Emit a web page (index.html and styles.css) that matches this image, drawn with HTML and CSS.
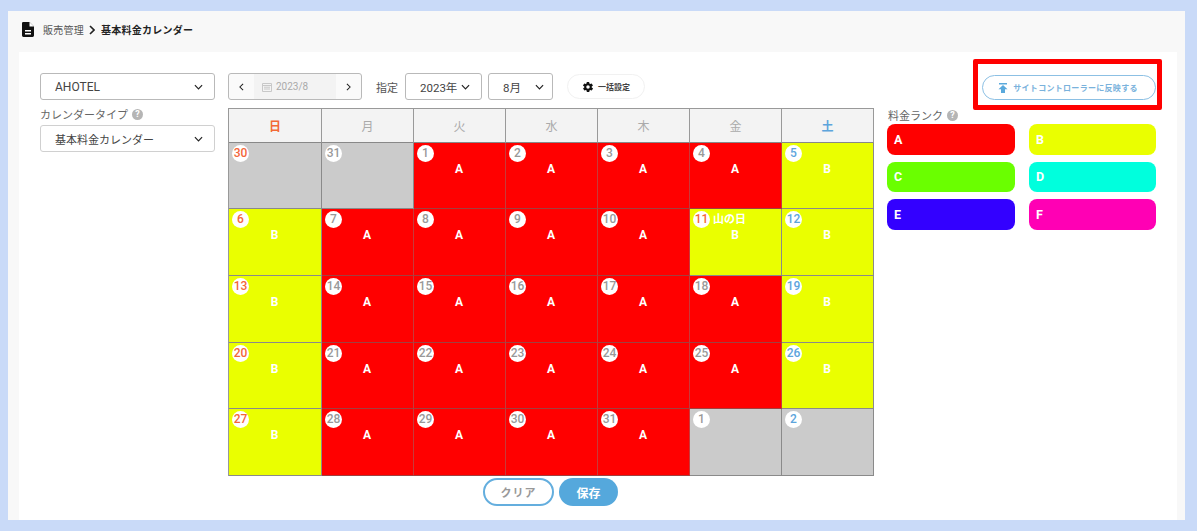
FILE: index.html
```html
<!DOCTYPE html>
<html lang="ja">
<head>
<meta charset="utf-8">
<title>基本料金カレンダー</title>
<link rel="stylesheet" href="styles.css">
</head>
<body>
<main class="panel">
  <nav class="crumbs">
    <svg class="doc" viewBox="0 0 12 15" width="12" height="15"><path d="M1.2 0H7.5L12 4.5V13.6A1.4 1.4 0 0 1 10.6 15H1.4A1.4 1.4 0 0 1 0 13.6V1.2A1.2 1.2 0 0 1 1.2 0Z" fill="#111"/><path d="M7.5 0V4.5H12Z" fill="#fff"/><path d="M3 8H9V9.4H3ZM3 11H9V12.4H3Z" fill="#fff"/></svg>
    <span class="crumb">販売管理</span>
    <svg class="crumb-sep" viewBox="0 0 6 10" width="6" height="10"><path d="M1 1L5 5L1 9" fill="none" stroke="#222" stroke-width="1.6"/></svg>
    <span class="crumb current">基本料金カレンダー</span>
  </nav>
  <section class="card">
    <aside class="left">
      <div class="select hotel"><span>AHOTEL</span><svg class="chev" viewBox="0 0 10 6"><path d="M1 1L5 5L9 1"/></svg></div>
      <div class="label">カレンダータイプ <span class="help">?</span></div>
      <div class="select type"><span>基本料金カレンダー</span><svg class="chev" viewBox="0 0 10 6"><path d="M1 1L5 5L9 1"/></svg></div>
    </aside>
    <div class="middle">
      <div class="toolbar">
        <div class="datenav">
          <span class="arrow"><svg viewBox="0 0 6 10" width="5" height="8"><path d="M5 1L1 5L5 9" fill="none" stroke="#222" stroke-width="1.3"/></svg></span>
          <span class="dateval"><svg viewBox="0 0 10 10" width="10" height="10"><path d="M.5 1.5H9.5V9.5H.5ZM.5 3.5H9.5M2 5.2H8M2 7H8" fill="none" stroke="#c8c8c8" stroke-width="1"/></svg>2023/8</span>
          <span class="arrow"><svg viewBox="0 0 6 10" width="5" height="8"><path d="M1 1L5 5L1 9" fill="none" stroke="#222" stroke-width="1.3"/></svg></span>
        </div>
        <span class="shitei">指定</span>
        <div class="select year"><span>2023年</span><svg class="chev" viewBox="0 0 10 6"><path d="M1 1L5 5L9 1"/></svg></div>
        <div class="select month"><span>8月</span><svg class="chev" viewBox="0 0 10 6"><path d="M1 1L5 5L9 1"/></svg></div>
        <button class="bulk"><svg viewBox="0 0 24 24" width="12" height="12"><path fill="#111" d="M19.4 13a7.5 7.5 0 0 0 0-2l2.1-1.6a.5.5 0 0 0 .1-.7l-2-3.4a.5.5 0 0 0-.6-.2l-2.5 1a7.3 7.3 0 0 0-1.7-1l-.4-2.7a.5.5 0 0 0-.5-.4h-4a.5.5 0 0 0-.5.4l-.4 2.7a7.3 7.3 0 0 0-1.7 1l-2.5-1a.5.5 0 0 0-.6.2l-2 3.4a.5.5 0 0 0 .1.7L4.6 11a7.5 7.5 0 0 0 0 2l-2.1 1.6a.5.5 0 0 0-.1.7l2 3.4a.5.5 0 0 0 .6.2l2.5-1a7.3 7.3 0 0 0 1.7 1l.4 2.7a.5.5 0 0 0 .5.4h4a.5.5 0 0 0 .5-.4l.4-2.7a7.3 7.3 0 0 0 1.7-1l2.5 1a.5.5 0 0 0 .6-.2l2-3.4a.5.5 0 0 0-.1-.7ZM12 15.5a3.5 3.5 0 1 1 0-7 3.5 3.5 0 0 1 0 7Z"/></svg>一括設定</button>
      </div>
      <div class="calendar">
        <div class="wd sun">日</div><div class="wd">月</div><div class="wd">火</div><div class="wd">水</div><div class="wd">木</div><div class="wd">金</div><div class="wd sat">土</div>

        <div class="day off"><b class="num sun">30</b></div>
        <div class="day off"><b class="num">31</b></div>
        <div class="day a"><b class="num">1</b><i>A</i></div>
        <div class="day a"><b class="num">2</b><i>A</i></div>
        <div class="day a"><b class="num">3</b><i>A</i></div>
        <div class="day a"><b class="num">4</b><i>A</i></div>
        <div class="day b"><b class="num sat">5</b><i>B</i></div>

        <div class="day b"><b class="num sun">6</b><i>B</i></div>
        <div class="day a"><b class="num">7</b><i>A</i></div>
        <div class="day a"><b class="num">8</b><i>A</i></div>
        <div class="day a"><b class="num">9</b><i>A</i></div>
        <div class="day a"><b class="num">10</b><i>A</i></div>
        <div class="day b"><b class="num sun">11</b><span class="holiday">山の日</span><i>B</i></div>
        <div class="day b"><b class="num sat">12</b><i>B</i></div>

        <div class="day b"><b class="num sun">13</b><i>B</i></div>
        <div class="day a"><b class="num">14</b><i>A</i></div>
        <div class="day a"><b class="num">15</b><i>A</i></div>
        <div class="day a"><b class="num">16</b><i>A</i></div>
        <div class="day a"><b class="num">17</b><i>A</i></div>
        <div class="day a"><b class="num">18</b><i>A</i></div>
        <div class="day b"><b class="num sat">19</b><i>B</i></div>

        <div class="day b"><b class="num sun">20</b><i>B</i></div>
        <div class="day a"><b class="num">21</b><i>A</i></div>
        <div class="day a"><b class="num">22</b><i>A</i></div>
        <div class="day a"><b class="num">23</b><i>A</i></div>
        <div class="day a"><b class="num">24</b><i>A</i></div>
        <div class="day a"><b class="num">25</b><i>A</i></div>
        <div class="day b"><b class="num sat">26</b><i>B</i></div>

        <div class="day b"><b class="num sun">27</b><i>B</i></div>
        <div class="day a"><b class="num">28</b><i>A</i></div>
        <div class="day a"><b class="num">29</b><i>A</i></div>
        <div class="day a"><b class="num">30</b><i>A</i></div>
        <div class="day a"><b class="num">31</b><i>A</i></div>
        <div class="day off"><b class="num">1</b></div>
        <div class="day off"><b class="num sat">2</b></div>
      </div>
      <div class="actions">
        <button class="btn clear">クリア</button>
        <button class="btn save">保存</button>
      </div>
    </div>
    <aside class="right">
      <div class="reflect-wrap">
        <button class="reflect"><svg viewBox="0 0 10 10" width="10" height="10"><path fill="#5aa9dc" d="M1 0H9V1.5H1ZM5 2L9.5 6.2H7V10H3V6.2H.5Z"/></svg>サイトコントローラーに反映する</button>
        <div class="annot"></div>
      </div>
      <div class="label rank-label">料金ランク <span class="help">?</span></div>
      <div class="ranks">
        <div class="rank ra">A</div><div class="rank rb">B</div>
        <div class="rank rc">C</div><div class="rank rd">D</div>
        <div class="rank re">E</div><div class="rank rf">F</div>
      </div>
    </aside>
  </section>
</main>
</body>
</html>
```

FILE: styles.css
```css
* { box-sizing: border-box; }
html, body { margin: 0; height: 100%; }
body {
  background: #c9daf8;
  padding: 11px 12px 11px 8px;
  font-family: Roboto, "Noto Sans CJK JP", sans-serif;
  color: #444;
  overflow: hidden;
}
.panel { background: #f8f8f8; height: 509px; padding-left: 11px; padding-right: 8px; display: flex; flex-direction: column; }
.crumbs { height: 41px; display: flex; align-items: center; font-size: 10px; letter-spacing: .25px; margin-left: 3px; padding-bottom: 4px; }
.doc { margin-right: 9px; }
.crumb { color: #555; }
.crumb-sep { margin: 0 6px 0 5px; }
.current { color: #222; font-weight: 700; }

.card { flex: 1; background: #fff; display: flex; padding: 21px 21px 0; }
.left { width: 175px; margin-right: 13px; }
.middle { width: 645px; margin-right: 14px; }
.right { width: 269px; }

.select {
  display: flex; align-items: center; justify-content: space-between;
  height: 27px; background: #fff; border: 1px solid #b9b9b9; border-radius: 3px;
  font-size: 12px; color: #444; padding: 0 11px 0 14px;
}
.type { border-color: #d0d0d0; font-size: 11px; }
.chev { width: 9px; height: 6px; flex: none; }
.chev path { fill: none; stroke: #222; stroke-width: 1.3; }
.label { font-size: 11px; color: #666; height: 25px; display: flex; align-items: center; gap: 4px; padding-top: 3px; }
.help { width: 11px; height: 11px; border-radius: 50%; background: #b5b5b5; color: #fff; font-size: 9px; font-weight: 700; display: inline-flex; align-items: center; justify-content: center; }

.toolbar { display: flex; align-items: center; height: 27px; margin-bottom: 8px; }
.datenav { width: 134px; height: 27px; display: flex; border: 1px solid #b9b9b9; border-radius: 3px; background: #fafafa; }
.arrow { width: 25px; display: flex; align-items: center; justify-content: center; }
.dateval { flex: 1; background: #f3f3f3; display: flex; align-items: center; gap: 4px; padding-left: 8px; font-size: 10px; color: #aaa; }
.shitei { font-size: 11px; color: #555; margin: 0 1px 0 14px; width: 28px; }
.year { width: 77px; padding: 0 11px 0 14px; margin-right: 6px; font-size: 11.5px; }
.month { width: 65px; padding: 0 8px 0 14px; margin-right: 14px; font-size: 11.5px; }
.bulk {
  width: 78px; height: 25px; border: 1px solid #f1f1f1; border-radius: 13px; background: #fff;
  display: flex; align-items: center; justify-content: center; gap: 4px; padding: 0;
  font: 700 8px Roboto, "Noto Sans CJK JP", sans-serif; color: #444;
}

.calendar {
  width: 646px; margin-right: -1px;
  display: grid; grid-template-columns: 93px repeat(5, 92px) 92px;
  grid-template-rows: 34px 66px 67px 67px 66px 67px;
  border-left: 1px solid #999; border-top: 1px solid #999;
}
.wd {
  background: #f3f3f3; border-right: 1px solid #999; border-bottom: 1px solid #888;
  display: flex; align-items: center; justify-content: center; font-size: 12px; color: #aaa;
}
.wd.sun { color: #f26a36; font-weight: 700; }
.wd.sat { color: #5da5dc; font-weight: 700; }
.day { position: relative; border-right: 1px solid #8a8a8a; border-bottom: 1px solid #8a8a8a; text-align: center; padding-right: 1px; }
.day.off { background: #cbcbcb; }
.day.a { background: #f00; border-right-color: #c83a3a; border-bottom-color: #a04040; }
.day.b { background: #eaff00; }
.num {
  position: absolute; left: 3px; top: 2px; width: 17px; height: 17px; border-radius: 50%;
  background: #fff; color: #999; font-size: 12px; line-height: 17px; text-align: center; font-weight: 500; font-style: normal;
}
.num.sun { color: #f4663a; }
.num.sat { color: #5da5dc; }
.day i { display: block; margin-top: 18px; font-style: normal; font-weight: 700; font-size: 12px; line-height: 16px; color: #fff; }
.holiday { position: absolute; left: 23px; top: 3px; font-size: 11px; font-weight: 700; line-height: 16px; color: #fff; }

.actions { display: flex; justify-content: center; gap: 5px; margin-top: 2px; }
.btn { height: 28px; border-radius: 14px; font: 700 11px Roboto, "Noto Sans CJK JP", sans-serif; padding: 0; }
.clear { width: 71px; background: #fff; border: 2px solid #64aede; color: #999; letter-spacing: 1px; }
.save { width: 59px; background: #55a8dc; border: 0; color: #fff; font-size: 12px; }

.reflect-wrap { position: relative; width: 174px; height: 25px; margin: 2px 0 8px auto; }
.reflect {
  width: 100%; height: 25px; border: 1px solid #8cc0e4; border-radius: 13px; background: #fff;
  display: flex; align-items: center; justify-content: center; gap: 5px; padding: 0 2px 0 0;
  font: 700 8px Roboto, "Noto Sans CJK JP", sans-serif; color: #7ab2dc; letter-spacing: .3px;
}
.annot { position: absolute; left: -9px; right: -6px; top: -16px; bottom: -10px; border: 5px solid #f00; border-radius: 2px; }

.rank-label { height: 14px; padding-top: 0; margin: 0 0 2px 1px; color: #666; }
.ranks { display: grid; grid-template-columns: 128px 127px; column-gap: 14px; row-gap: 7px; }
.rank { height: 30.5px; border-radius: 8px; display: flex; align-items: center; padding-left: 7px; color: #fff; font-size: 12.5px; font-weight: 700; }
.ra { background: #f00; } .rb { background: #eaff00; }
.rc { background: #6aff00; } .rd { background: #00ffdd; }
.re { background: #3300ff; } .rf { background: #ff00b4; }
```
